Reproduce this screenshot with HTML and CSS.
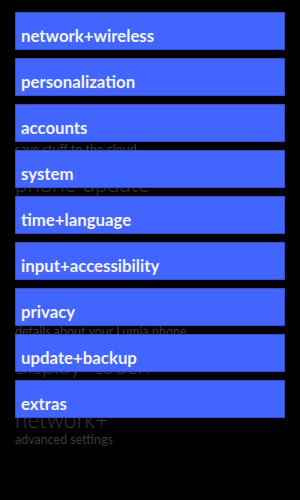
FILE: index.html
```html
<!DOCTYPE html>
<html lang="en">
<head>
    <meta charset="UTF-8" />
    <meta name="viewport" content="width=device-width, initial-scale=1.0" />
    <title>settings</title>
    <link rel="stylesheet" href="styles.css">
</head>
<body>
    <div class="screen">
        <!-- old settings list, still sliding out underneath -->
        <ul class="list">
            <li class="item">
                <div class="title">kid's corner</div>
                <div class="sub">set up a space for kids</div>
            </li>
            <li class="item tight">
                <div class="title">speech</div>
                <div class="sub">voice commands and more</div>
            </li>
            <li class="item spaced">
                <div class="title">backup</div>
                <div class="sub">save stuff to the cloud</div>
            </li>
            <li class="item">
                <div class="title">phone update</div>
                <div class="sub">check for updates</div>
            </li>
            <li class="item spaced-lg">
                <div class="title">feedback</div>
                <div class="sub">send us comments</div>
            </li>
            <li class="item spaced-sm">
                <div class="title">about</div>
                <div class="sub">details about your Lumia phone</div>
            </li>
            <li class="item">
                <div class="title">display+touch</div>
                <div class="sub">screen and glove mode</div>
            </li>
            <li class="item">
                <div class="title">network+</div>
                <div class="sub">advanced settings</div>
            </li>
        </ul>

        <!-- new category tiles on top -->
        <nav class="tiles">
            <a class="tile" href="#">network+wireless</a>
            <a class="tile" href="#">personalization</a>
            <a class="tile" href="#">accounts</a>
            <a class="tile" href="#">system</a>
            <a class="tile" href="#">time+language</a>
            <a class="tile" href="#">input+accessibility</a>
            <a class="tile" href="#">privacy</a>
            <a class="tile" href="#">update+backup</a>
            <a class="tile" href="#">extras</a>
        </nav>
    </div>
</body>
</html>
```

FILE: styles.css
```css
html, body {
    margin: 0;
    background: #000;
}
body {
    font-family: Lato, "Open Sans", sans-serif;
}
.screen {
    position: relative;
    width: 300px;
    height: 500px;
    overflow: hidden;
}
.list {
    display: flex;
    flex-direction: column;
    gap: 14px;
    list-style: none;
    margin: 0;
    padding: 10px 15px 0;
}
.item {
    color: #3c3c3c;
}
.item.tight {
    margin-top: -8px;
}
.item.spaced {
    margin-top: 8px;
}
.item.spaced-lg {
    margin-top: 16px;
}
.item.spaced-sm {
    margin-top: 4px;
}
.title {
    font-size: 22.5px;
    font-weight: 300;
    line-height: 24px;
    white-space: nowrap;
}
.sub {
    font-size: 12.5px;
    line-height: 16px;
    white-space: nowrap;
}
.tiles {
    position: absolute;
    top: 12px;
    left: 15px;
    right: 15px;
    display: flex;
    flex-direction: column;
    gap: 8px;
}
.tile {
    box-sizing: border-box;
    height: 38px;
    padding: 13px 5px 0;
    background: #4264ff;
    border: 1px solid #3350d0;
    color: #f4f5ff;
    font-size: 16.8px;
    font-weight: 700;
    line-height: 20px;
    text-decoration: none;
    white-space: nowrap;
}
```
